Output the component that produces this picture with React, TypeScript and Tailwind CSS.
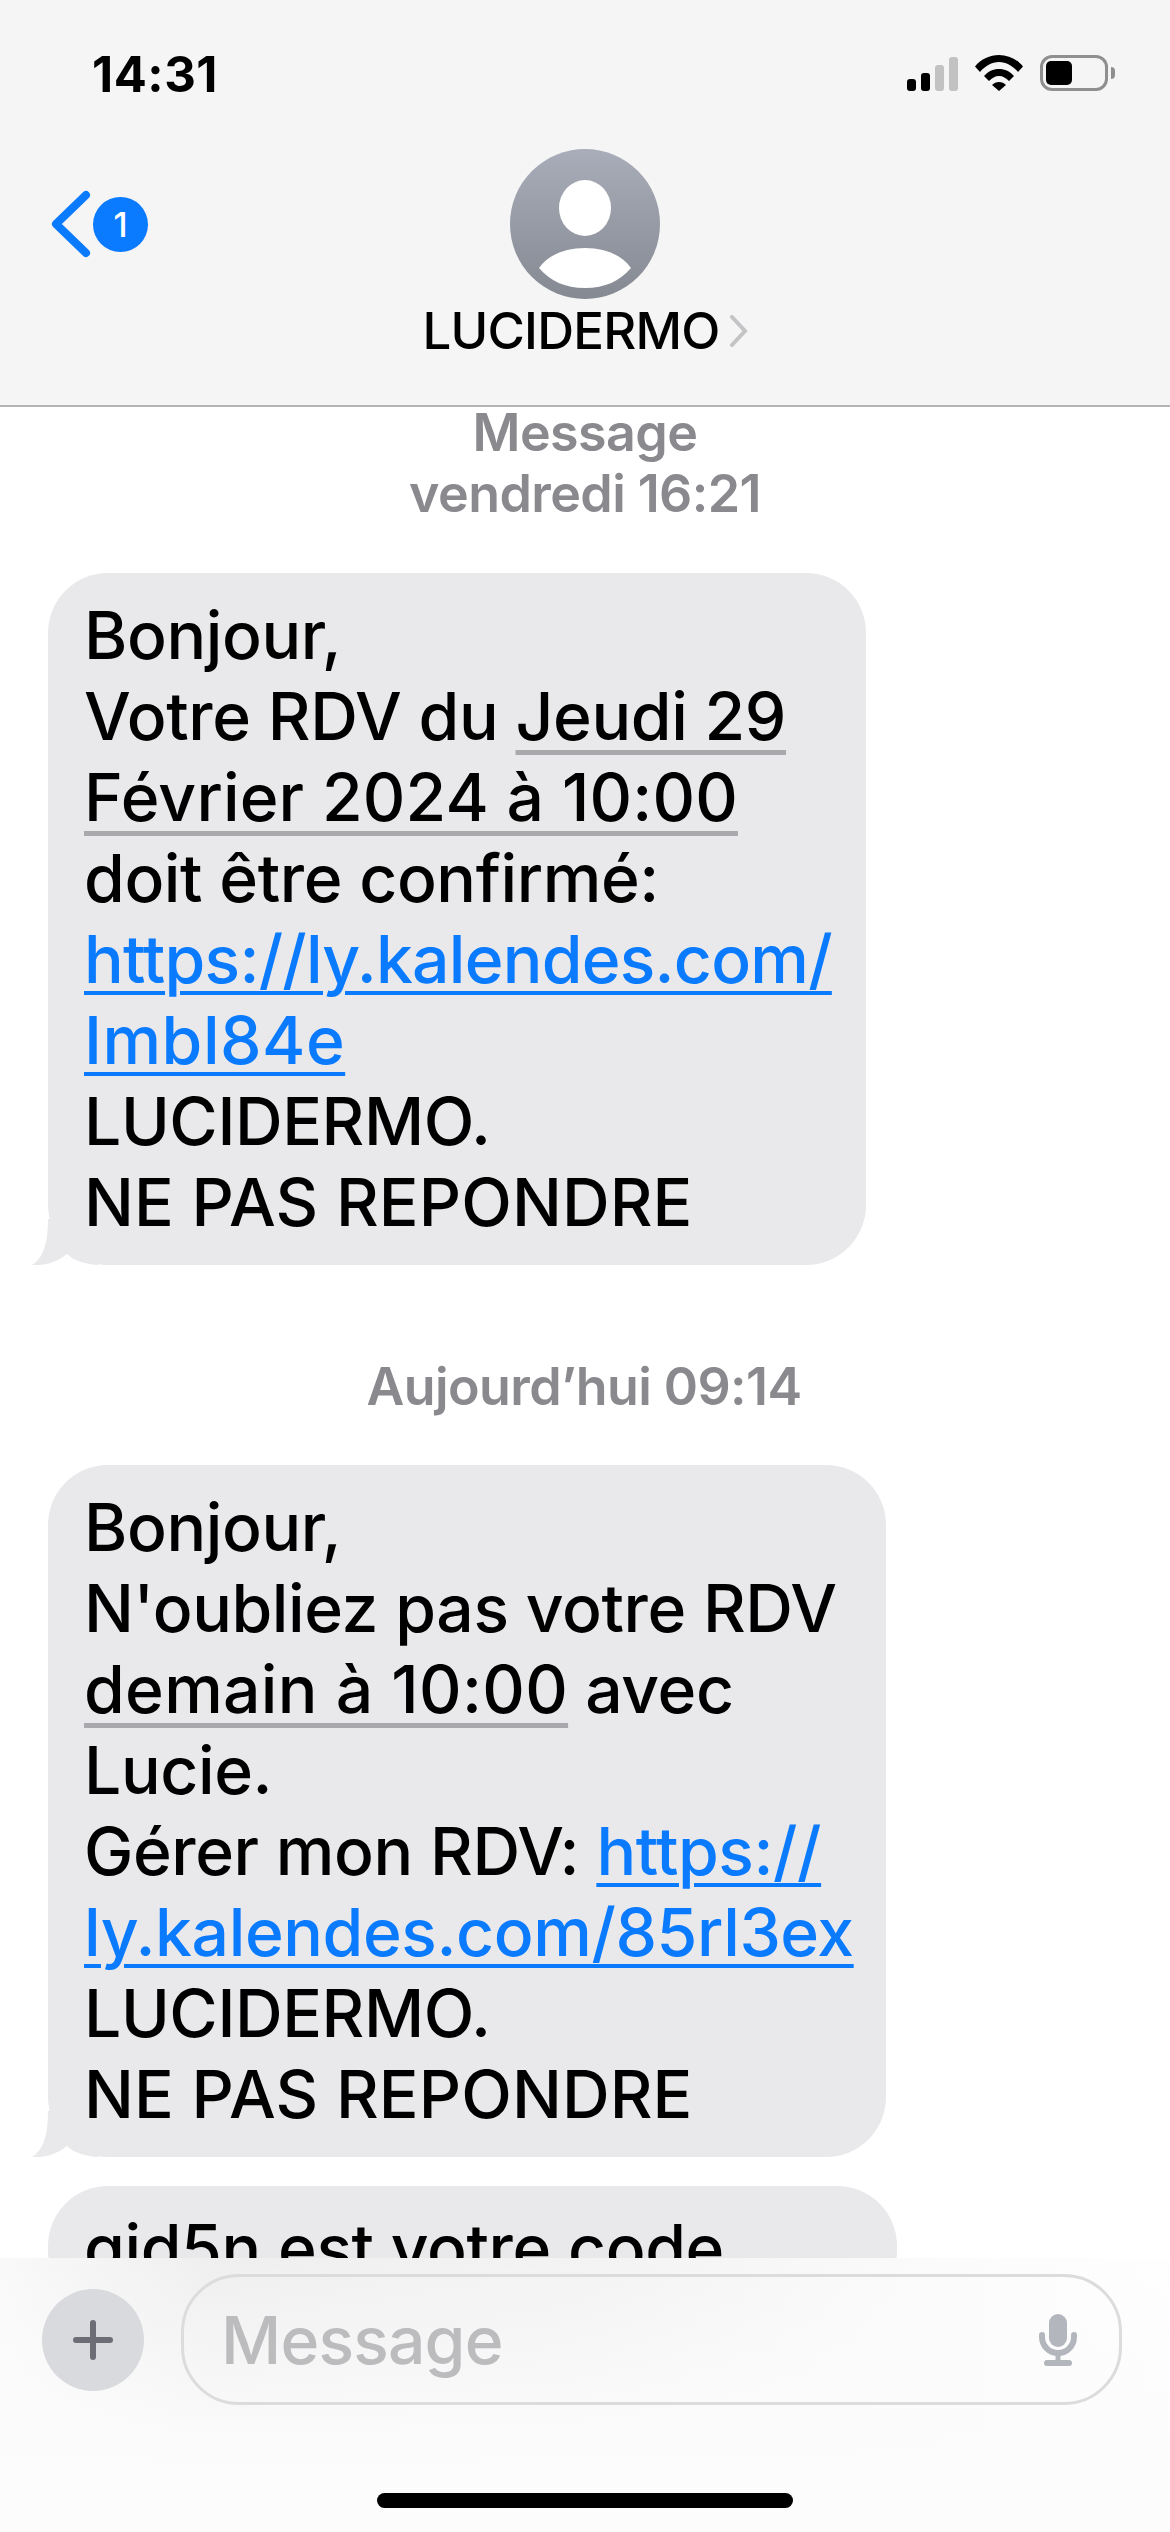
const font = { fontFamily: 'Inter, "Liberation Sans", sans-serif' };

const Bubble = ({ width, children }: { width: string; children: React.ReactNode }) => (
  <div className={`relative ${width} rounded-[60px] bg-[#e9e9eb] pl-[36px] pt-[22px] pb-[22px] text-[66px] leading-[81px] font-medium tracking-[-0.4px] text-black whitespace-nowrap`}>
    <svg className="absolute left-[-16px] bottom-0" width="66" height="46" viewBox="0 0 66 46">
      <path d="M16 0 C16 20 13 38 0 46 C14 47 27 42 35 35 C40 40 50 45 66 46 L66 0 Z" fill="#e9e9eb" />
    </svg>
    <div className="relative">{children}</div>
  </div>
);

const DateLink = ({ tracking, children }: { tracking: string; children: React.ReactNode }) => (
  <span className={`${tracking} underline decoration-[#a9a9ad] decoration-[5px] underline-offset-[10px]`}>{children}</span>
);

const Url = ({ tracking, children }: { tracking: string; children: React.ReactNode }) => (
  <span className={`${tracking} text-[#0a7aff] underline decoration-[4px] underline-offset-[8px]`}>{children}</span>
);

const App = () => {
  return (
    <div className="relative h-[2532px] w-[1170px] overflow-hidden bg-white" style={font}>
      <header className="relative h-[407px] border-b-[2px] border-[#b4b4b6] bg-[#f5f5f5]">
        <div className="flex items-start justify-between pl-[92px] pr-[55px] pt-[47px]">
          <span className="text-[49px] leading-[56px] font-bold tracking-[0.5px] text-black">14:31</span>
          <div className="flex items-start gap-[17px] pt-[8px]">
            <svg className="mt-[2px]" width="51" height="34" viewBox="0 0 51 34">
              <rect x="0" y="22" width="9" height="12" rx="3" fill="#000" />
              <rect x="14" y="16" width="9" height="18" rx="3" fill="#000" />
              <rect x="28" y="8" width="9" height="26" rx="3" fill="#c2c2c2" />
              <rect x="42" y="0" width="9" height="34" rx="3" fill="#c2c2c2" />
            </svg>
            <svg width="48" height="36" viewBox="0 0 48 36">
              <path d="M0 11.5 C6 4 15 0 24 0 C33 0 42 4 48 11.5 L43 17 C38 11 31 7 24 7 C17 7 10 11 5 17 Z" fill="#000" />
              <path d="M9 21 C13 16.5 18 14 24 14 C30 14 35 16.5 39 21 L34 26 C31 23 28 21 24 21 C20 21 17 23 14 26 Z" fill="#000" />
              <path d="M17 30 C19 28 21 27 24 27 C27 27 29 28 31 30 L24 36 Z" fill="#000" />
            </svg>
            <div className="flex items-center gap-[3px]">
              <div className="h-[36px] w-[68px] rounded-[12px] border-[3px] border-[#8f8f8f] p-[3px]">
                <div className="h-full w-[26px] rounded-[5px] bg-black" />
              </div>
              <div className="h-[12px] w-[4px] rounded-r-full bg-[#8f8f8f]" />
            </div>
          </div>
        </div>

        {/* back button */}
        <div className="absolute left-[50px] top-[190px] flex items-center">
          <svg width="42" height="68" viewBox="0 0 42 68">
            <path d="M36 5 L6 34 L36 63" fill="none" stroke="#0a7aff" strokeWidth="8" strokeLinecap="round" strokeLinejoin="round" />
          </svg>
          <div className="ml-[1px] flex h-[55px] w-[55px] items-center justify-center rounded-full bg-[#0a7aff] text-[34px] font-medium text-white">1</div>
        </div>

        {/* contact */}
        <div className="absolute left-0 right-0 top-[149px] flex flex-col items-center">
          <svg width="150" height="150" viewBox="0 0 150 150">
            <defs>
              <linearGradient id="avatar" x1="0" y1="0" x2="0" y2="1">
                <stop offset="0" stopColor="#a8adb9" />
                <stop offset="1" stopColor="#858992" />
              </linearGradient>
            </defs>
            <circle cx="75" cy="75" r="75" fill="url(#avatar)" />
            <ellipse cx="75" cy="59" rx="26" ry="28" fill="#fff" />
            <path d="M29 119 C38 106 55 99 75 99 C95 99 112 106 121 119 C110 132 95 139 75 139 C55 139 40 132 29 119 Z" fill="#fff" />
          </svg>
          <div className="mt-[3px] flex items-center pl-[2px]">
            <span className="text-[51px] leading-[58px] font-medium tracking-[-0.8px] text-black">LUCIDERMO</span>
            <svg className="ml-[10px]" width="20" height="32" viewBox="0 0 20 32">
              <path d="M3 2 L16 16 L3 30" fill="none" stroke="#c4c4c6" strokeWidth="4" strokeLinecap="round" />
            </svg>
          </div>
        </div>
      </header>

      <main className="flex flex-col pl-[48px]">
        <div className="-mt-[5px] flex flex-col items-center pr-[48px] text-[52px] leading-[61px] font-semibold tracking-[-0.6px] text-[#8a8a8e]">
          <span>Message</span>
          <span>vendredi 16:21</span>
        </div>
        <div className="mt-[49px]">
          <Bubble width="w-[818px]">
            Bonjour,<br />
            Votre RDV du <DateLink tracking="tracking-[-0.4px]">Jeudi 29</DateLink><br />
            <DateLink tracking="tracking-[0.15px]">Février 2024 à 10:00</DateLink><br />
            doit être confirmé:<br />
            <Url tracking="tracking-[-0.75px]">https://ly.kalendes.com/</Url><br />
            <Url tracking="tracking-[0.5px]">Imbl84e</Url><br />
            LUCIDERMO.<br />
            <span className="tracking-[0.1px]">NE PAS REPONDRE</span>
          </Bubble>
        </div>
        <div className="mt-[92px] pr-[50px] text-center text-[52px] leading-[59px] font-semibold tracking-[-0.6px] text-[#8a8a8e]">Aujourd’hui 09:14</div>
        <div className="mt-[49px]">
          <Bubble width="w-[838px]">
            Bonjour,<br />
            N'oubliez pas votre RDV<br />
            <DateLink tracking="tracking-[0.3px]">demain à 10:00</DateLink> avec<br />
            Lucie.<br />
            Gérer mon RDV: <Url tracking="tracking-[-0.4px]">https://</Url><br />
            <Url tracking="tracking-[-0.4px]">ly.kalendes.com/85rl3ex</Url><br />
            LUCIDERMO.<br />
            <span className="tracking-[0.1px]">NE PAS REPONDRE</span>
          </Bubble>
        </div>
        <div className="mt-[29px] w-[849px] rounded-[60px] bg-[#e9e9eb] pl-[36px] pt-[22px] pb-[22px] text-[66px] leading-[81px] font-medium tracking-[-0.4px] text-black">
          gid5n est votre code
        </div>
      </main>

      {/* input bar */}
      <div className="absolute bottom-0 left-0 right-0 h-[274px] bg-[linear-gradient(to_bottom,rgba(252,252,252,0)_0%,rgba(252,252,252,1)_75%),linear-gradient(to_right,#f9f9f9_0%,#efefef_18%,#f3f3f3_50%,#fcfcfc_85%,#fefefe_100%)]">
        <div className="flex items-center gap-[37px] pl-[42px] pr-[48px] pt-[16px]">
          <div className="flex h-[102px] w-[102px] items-center justify-center rounded-full bg-[#d9dadd]">
            <svg width="40" height="40" viewBox="0 0 40 40">
              <path d="M20 3 V37 M3 20 H37" stroke="#6d6e75" strokeWidth="6" strokeLinecap="round" />
            </svg>
          </div>
          <div className="flex h-[131px] flex-1 items-center justify-between rounded-[58px] border-[3px] border-[#dcdcdc] pl-[37px] pr-[42px]">
            <span className="text-[66px] leading-[72px] font-medium tracking-[-0.8px] text-[#bcbcbe]">Message</span>
            <svg width="38" height="52" viewBox="0 0 38 52">
              <rect x="10" y="0" width="18" height="33" rx="9" fill="#b3b6bc" />
              <path d="M3 21 V23 A16 16 0 0 0 35 23 V21" fill="none" stroke="#b3b6bc" strokeWidth="6" strokeLinecap="round" />
              <rect x="16.5" y="38" width="5" height="10" fill="#b3b6bc" />
              <rect x="5" y="46" width="28" height="6" rx="3" fill="#b3b6bc" />
            </svg>
          </div>
        </div>
        <div className="mx-auto mt-[88px] h-[15px] w-[416px] rounded-full bg-black" />
      </div>
    </div>
  );
};

export default App;
